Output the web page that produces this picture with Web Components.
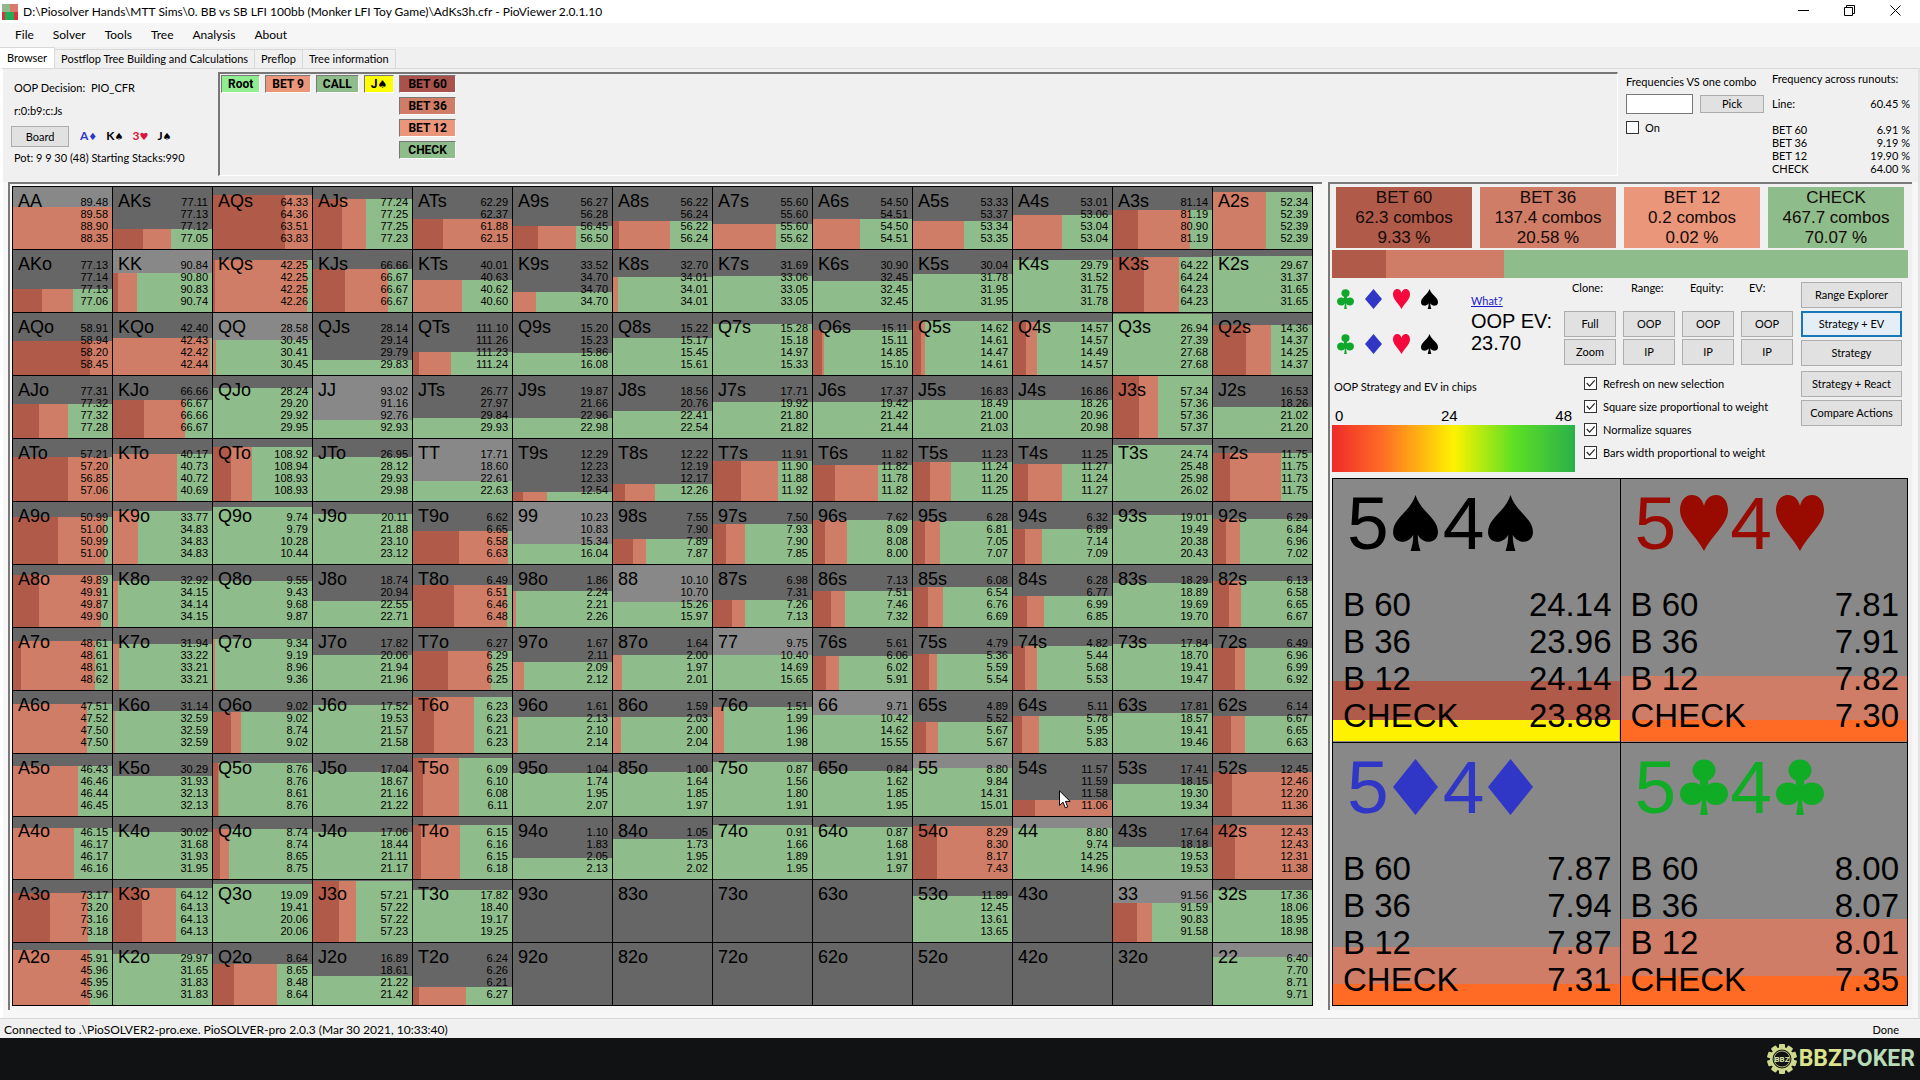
<!DOCTYPE html>
<html lang="en">
<head>
<meta charset="utf-8">
<title>PioViewer</title>
<style>
html, body { margin: 0; height: 100%; }
body {
  --dark: #b05b4a; --mid: #cf7d66; --light: #e9967a; --check: #8fbc8b; --line: #000;
  --arial: "Liberation Sans", Arial, sans-serif;
  font: 11px/14px Lato, sans-serif; color: #000; background: #f0f0f0;
}
</style>
</head>
<body>
<pio-window></pio-window>
<script>
const define = (name, css, html) => customElements.define(name, class extends HTMLElement {
  constructor() {
    super();
    this.attachShadow({ mode: 'open' });
  }
  connectedCallback() {
    const body = typeof html === 'function' ? html(this) : html;
    this.shadowRoot.innerHTML = `<style>*{box-sizing:border-box}${css}</style>${body}`;
  }
});

/* ---------- suits ---------- */
const SUITS = {
  s: ['#000', '<path d="M50 0C57 24 78 40 90 56C104 74 104 98 84 103C72 106 60 98 55 88C55 102 57 112 61 124H39C43 112 45 102 45 88C40 98 28 106 16 103C-4 98 -4 74 10 56C22 40 43 24 50 0Z"/>'],
  h: ['#f5083c', '<path d="M50 24C46 8 37 0 25 0C10 0 0 14 0 34C0 64 32 88 50 124C68 88 100 64 100 34C100 14 90 0 75 0C63 0 54 8 50 24Z"/>'],
  d: ['#3036c6', '<path d="M50 0L100 62L50 124L0 62Z"/>'],
  c: ['#10a82c', '<circle cx="50" cy="25" r="24"/><circle cx="25" cy="77" r="25"/><circle cx="75" cy="77" r="25"/><path d="M42 40H58L60 80H54C54 98 56 110 58 124H42C44 110 46 98 46 80H40Z"/>']
};
define('suit-icon',
  ':host{display:inline-block;width:17px;height:20px}svg{display:block;width:100%;height:100%}',
  el => {
    const [color, shape] = SUITS[el.getAttribute('suit')];
    return `<svg viewBox="0 0 100 124" preserveAspectRatio="none" fill="${el.getAttribute('color') || color}" aria-hidden="true">${shape}</svg>`;
  });

/* ---------- small controls ---------- */
define('pio-button',
  `:host{display:block}
   button{display:block;width:100%;height:100%;margin:0;padding:0;border:1px solid #adadad;background:#e1e1e1;color:#000;font:inherit;text-align:center}
   :host([active]) button{border:2px solid #1877b8;background:#e4eef6}`,
  '<button type="button"><slot></slot></button>');

define('pio-check',
  `:host{display:block}
   label{display:flex;align-items:center;gap:6px;height:100%}
   input{appearance:none;margin:0;width:13px;height:13px;border:1px solid #333;background:#fff;display:grid}
   input:checked::before{content:"";background:#222;clip-path:polygon(12% 50%,20% 42%,42% 66%,84% 18%,92% 26%,42% 82%)}`,
  el => `<label><input type="checkbox"${el.hasAttribute('checked') ? ' checked' : ''}><slot></slot></label>`);

/* ---------- window chrome ---------- */
define('pio-titlebar',
  `:host{display:flex;align-items:center;height:23px;background:#fff;padding:0 14px 0 2px;font-size:12px;line-height:16px}
   .icon{width:16px;height:16px;margin-right:5px}
   .buttons{margin-left:auto;display:flex;gap:24px;padding-bottom:3px}
   button{border:0;background:none;padding:0;width:22px;height:18px;display:grid;place-items:center}
   svg{display:block}`,
  `<svg class="icon" viewBox="0 0 16 16" aria-hidden="true"><path fill="#8fb98b" d="M0 0h8v8H0z"/><path fill="#d9786b" d="M8 0h8v8H8z"/><path fill="#d8333d" d="M0 8h3v8H0zM12 8h4v8h-4z"/><path fill="#1fae55" d="M3 8h9v8H3z"/></svg>
   <span>D:\\Piosolver Hands\\MTT Sims\\0. BB vs SB LFI 100bb (Monker LFI Toy Game)\\AdKs3h.cfr - PioViewer 2.0.1.10</span>
   <div class="buttons">
     <button type="button" aria-label="Minimize"><svg width="11" height="11" fill="none" stroke="#000"><path d="M0 5.5H11"/></svg></button>
     <button type="button" aria-label="Restore"><svg width="11" height="11" fill="none" stroke="#000"><path d="M.5 2.500H8.500V10.500H.5ZM2.500 2.500V.5H10.500V8.500H8.500"/></svg></button>
     <button type="button" aria-label="Close"><svg width="11" height="11" fill="none" stroke="#000"><path d="M.5.5L10.500 10.500M10.500.5L.5 10.500"/></svg></button>
   </div>`);

define('pio-menu',
  `:host{display:flex;align-items:center;gap:19px;height:24px;padding-left:15px;background:#f6f6f7;font-size:12px;line-height:16px}
   button{border:0;background:none;padding:0;font:inherit;color:#000}`,
  ['File', 'Solver', 'Tools', 'Tree', 'Analysis', 'About'].map(t => `<button type="button">${t}</button>`).join(''));

define('pio-tabs',
  `:host{display:flex;align-items:flex-end;height:21px}
   button{font:inherit;color:#000;background:#f0f0f0;border:1px solid #d9d9d9;border-width:1px 1px 0 0;height:19px;padding:0 6px}
   .on{background:#fff;height:21px;padding:0 7px 1px}`,
  `<button type="button" class="on">Browser</button><button type="button">Postflop Tree Building and Calculations</button><button type="button">Preflop</button><button type="button">Tree information</button>`);

/* ---------- header strip ---------- */
define('decision-info',
  `:host{display:flex;flex-direction:column;align-items:flex-start;gap:9px;width:218px;padding:12px 0 0 14px}
   .board{display:flex;align-items:center;margin:-1px 0 -5px -3px;gap:9px;font-size:12px}
   pio-button{width:58px;height:21px;margin-right:2px;font-size:11px}
   b{white-space:nowrap}
   i{font:normal 10px/14px "DejaVu Sans",sans-serif}`,
  `<span>OOP Decision:&nbsp; PIO_CFR</span><span>r:0:b9:c:Js</span>
   <div class="board"><pio-button>Board</pio-button>
     <b style="color:#3036c6">A<i>♦</i></b><b>K<i>♠</i></b><b style="color:#dc143c">3<i>♥</i></b><b>J<i>♠</i></b></div>
   <span>Pot: 9 9 30 (48) Starting Stacks:990</span>`);

define('tree-node',
  `:host{display:block}
   button{display:block;box-sizing:border-box;width:100%;height:18px;padding:0 var(--pad,6px);border:1px solid #fff;border-top-color:#777;border-left-color:#777;background:var(--c);color:#000;font:bold 12px/14px Roboto,sans-serif;white-space:nowrap}`,
  '<button type="button"><slot></slot></button>');

define('game-tree',
  `:host{display:flex;align-items:flex-start;gap:5px;flex:1;height:104px;margin-top:3px;padding:1px;border:1px solid #fff;border-top:2px solid #777;border-left:2px solid #777}
   .next{display:grid;gap:4px;--pad:8px}
   i{font:normal 11px/14px "DejaVu Sans",sans-serif}`,
  `<tree-node style="--c:#90ee90">Root</tree-node>
   <tree-node style="--c:var(--light)">BET 9</tree-node>
   <tree-node style="--c:var(--check)">CALL</tree-node>
   <tree-node style="--c:#ff0">J<i>♠</i></tree-node>
   <div class="next">
     <tree-node style="--c:#a9524b">BET 60</tree-node>
     <tree-node style="--c:var(--mid)">BET 36</tree-node>
     <tree-node style="--c:var(--light)">BET 12</tree-node>
     <tree-node style="--c:var(--check)">CHECK</tree-node>
   </div>`);

define('combo-filter',
  `:host{display:block;width:154px;padding:6px 0 0 8px}
   label{display:block;white-space:nowrap}
   .row{display:flex;align-items:center;gap:7px;margin:5px 0 7px}
   input{width:67px;height:20px;padding:0 3px;border:1px solid #777;background:#fff;font:inherit}
   pio-button{width:64px;height:18px}
   pio-check{height:13px}`,
  `<label for="combo">Frequencies VS one combo</label>
   <div class="row"><input id="combo" type="text"><pio-button>Pick</pio-button></div>
   <pio-check>On</pio-check>`);

define('runout-stats',
  `:host{display:block;width:146px;padding:3px 8px 0 0}
   table{width:100%;border-collapse:collapse}
   caption{text-align:left;white-space:nowrap;padding-bottom:11px}
   td,th{padding:0;font-weight:normal;text-align:left;line-height:13px}
   td{text-align:right}
   tr:first-child>*{padding-bottom:13px}`,
  `<table><caption>Frequency across runouts:</caption><tbody>${
    [['Line:', '60.45'], ['BET 60', '6.91'], ['BET 36', '9.19'], ['BET 12', '19.90'], ['CHECK', '64.00']]
      .map(([n, v]) => `<tr><th scope="row">${n}</th><td>${v} %</td></tr>`).join('')}</tbody></table>`);

/* ---------- range matrix ----------
   hand : four EVs : bar height (of 62) : end of the dark part : end of the middle part (of 99) */
const HANDS = `
AA:89.48 89.58 88.90 88.35:42:0:99|AKs:77.11 77.13 77.12 77.05:20:30:58|AQs:64.33 64.36 63.51 63.83:54:72:99|AJs:77.24 77.25 77.25 77.23:50:29:53|ATs:62.29 62.37 61.88 62.15:30:30:99|A9s:56.27 56.28 56.45 56.50:23:25:63|A8s:56.22 56.24 56.22 56.24:28:6:57|A7s:55.60 55.60 55.60 55.62:25:0:63|A6s:54.50 54.51 54.50 54.51:30:0:47|A5s:53.33 53.37 53.34 53.35:28:0:51|A4s:53.01 53.06 53.04 53.04:34:0:49|A3s:81.14 81.19 80.90 81.19:39:25:77|A2s:52.34 52.39 52.39 52.39:57:0:53
AKo:77.13 77.14 77.13 77.06:23:29:60|KK:90.84 90.80 90.83 90.74:39:5:24|KQs:42.25 42.25 42.25 42.26:52:2:94|KJs:66.66 66.67 66.67 66.67:43:32:75|KTs:40.01 40.63 40.62 40.60:32:0:49|K9s:33.52 34.70 34.70 34.70:20:0:23|K8s:32.70 34.01 34.01 34.01:35:0:5|K7s:31.69 33.06 33.05 33.05:36:0:0|K6s:30.90 32.45 32.45 32.45:31:0:0|K5s:30.04 31.78 31.95 31.95:38:0:0|K4s:29.79 31.52 31.75 31.78:52:0:0|K3s:64.22 64.24 64.23 64.23:55:31:66|K2s:29.67 31.37 31.65 31.65:56:0:0
AQo:58.91 58.94 58.20 58.45:34:77:99|KQo:42.40 42.43 42.42 42.44:37:0:97|QQ:28.58 30.45 30.41 30.45:35:0:3|QJs:28.14 29.14 29.79 29.83:15:0:0|QTs:111.10 111.26 111.23 111.24:23:6:38|Q9s:15.20 15.23 15.86 16.08:22:0:0|Q8s:15.22 15.17 15.45 15.61:37:0:0|Q7s:15.28 15.18 14.97 15.33:51:0:0|Q6s:15.11 15.11 14.85 15.10:45:9:11|Q5s:14.62 14.61 14.47 14.61:54:8:12|Q4s:14.57 14.57 14.49 14.57:53:13:24|Q3s:26.94 27.39 27.68 27.68:61:0:0|Q2s:14.36 14.37 14.25 14.37:50:33:58
AJo:77.31 77.32 77.32 77.28:34:26:55|KJo:66.66 66.67 66.66 66.67:38:31:72|QJo:28.24 29.20 29.92 29.95:50:0:0|JJ:93.02 91.16 92.76 92.93:18:0:0|JTs:26.77 27.97 29.84 29.93:20:0:0|J9s:19.87 21.66 22.96 22.98:20:0:0|J8s:18.56 20.76 22.41 22.54:27:0:0|J7s:17.71 19.92 21.80 21.82:36:0:0|J6s:17.37 19.42 21.42 21.44:36:0:0|J5s:16.83 18.49 21.00 21.03:38:0:0|J4s:16.86 18.26 20.96 20.98:38:0:0|J3s:57.34 57.36 57.36 57.37:62:26:45|J2s:16.53 18.26 21.02 21.20:31:0:0
ATo:57.21 57.20 56.85 57.06:44:55:97|KTo:40.17 40.73 40.72 40.69:47:0:64|QTo:108.92 108.94 108.93 108.93:54:18:39|JTo:26.95 28.12 29.93 29.98:44:0:0|TT:17.71 18.60 22.61 22.63:20:0:0|T9s:12.29 12.23 12.33 12.54:9:10:34|T8s:12.22 12.19 12.17 12.26:17:12:42|T7s:11.91 11.90 11.88 11.92:40:28:65|T6s:11.82 11.82 11.78 11.82:36:22:65|T5s:11.23 11.24 11.20 11.25:39:17:38|T4s:11.25 11.27 11.24 11.27:37:15:49|T3s:24.74 25.48 25.98 26.02:56:0:0|T2s:11.75 11.75 11.73 11.75:48:17:68
A9o:50.99 51.00 50.99 51.00:47:45:92|K9o:33.77 34.83 34.83 34.83:53:0:25|Q9o:9.74 9.79 10.28 10.44:57:0:0|J9o:20.11 21.88 23.10 23.12:50:0:0|T9o:6.62 6.65 6.58 6.63:33:46:95|99:10.23 10.83 15.34 16.04:20:0:0|98s:7.55 7.90 7.89 7.87:25:20:33|97s:7.50 7.93 7.90 7.85:40:13:32|96s:7.62 8.09 8.08 8.00:44:12:34|95s:6.28 6.81 7.05 7.07:43:12:27|94s:6.32 6.89 7.14 7.09:35:12:29|93s:19.01 19.49 20.38 20.43:49:0:0|92s:6.29 6.84 6.96 7.02:45:13:27
A8o:49.89 49.91 49.87 49.90:52:26:88|K8o:32.92 34.15 34.14 34.15:46:0:5|Q8o:9.55 9.43 9.68 9.87:46:0:0|J8o:18.74 20.94 22.55 22.71:26:0:0|T8o:6.49 6.51 6.46 6.48:42:41:94|98o:1.86 2.24 2.21 2.26:36:0:3|88:10.10 10.70 15.26 15.97:25:0:0|87s:6.98 7.31 7.26 7.13:27:19:32|86s:7.13 7.51 7.46 7.32:36:18:32|85s:6.08 6.54 6.76 6.69:40:15:30|84s:6.28 6.77 6.99 6.85:31:14:31|83s:18.29 18.89 19.69 19.70:44:0:0|82s:6.13 6.58 6.65 6.67:46:16:28
A7o:48.61 48.61 48.61 48.62:49:8:82|K7o:31.94 33.22 33.21 33.21:46:0:6|Q7o:9.34 9.19 8.96 9.36:51:0:2|J7o:17.82 20.06 21.94 21.96:35:0:0|T7o:6.27 6.29 6.25 6.25:39:35:78|97o:1.67 2.11 2.09 2.12:28:0:11|87o:1.64 2.00 1.97 2.01:35:0:9|77:9.75 10.40 14.69 15.65:35:0:0|76s:5.61 6.06 6.02 5.91:34:13:26|75s:4.79 5.36 5.59 5.54:36:16:24|74s:4.82 5.44 5.68 5.53:44:12:24|73s:17.84 18.70 19.41 19.47:46:0:0|72s:6.49 6.96 6.99 6.92:42:22:32
A6o:47.51 47.52 47.50 47.50:49:0:74|K6o:31.14 32.59 32.59 32.59:42:0:2|Q6o:9.02 9.02 8.74 9.02:41:18:28|J6o:17.52 19.53 21.57 21.58:48:0:0|T6o:6.23 6.23 6.21 6.23:56:21:61|96o:1.61 2.13 2.10 2.14:36:0:5|86o:1.59 2.03 2.00 2.04:36:0:8|76o:1.51 1.99 1.96 1.98:46:0:11|66:9.71 10.42 14.62 15.55:38:0:0|65s:4.89 5.52 5.67 5.67:31:13:25|64s:5.11 5.78 5.95 5.83:37:9:26|63s:17.81 18.57 19.41 19.46:40:0:0|62s:6.14 6.67 6.65 6.63:37:18:32
A5o:46.43 46.46 46.44 46.45:50:0:65|K5o:30.29 31.93 32.13 32.13:40:0:0|Q5o:8.76 8.76 8.61 8.76:53:5:6|J5o:17.04 18.67 21.16 21.22:44:0:0|T5o:6.09 6.10 6.08 6.11:58:10:46|95o:1.04 1.74 1.95 2.07:43:0:0|85o:1.00 1.64 1.85 1.97:44:0:0|75o:0.87 1.56 1.80 1.91:54:0:0|65o:0.84 1.62 1.85 1.95:45:0:0|55:8.80 9.84 14.31 15.01:48:0:0|54s:11.57 11.59 11.58 11.06:16:22:99|53s:17.41 18.15 19.30 19.34:32:0:0|52s:12.45 12.46 12.20 11.36:44:19:99
A4o:46.15 46.17 46.17 46.16:51:0:61|K4o:30.02 31.68 31.93 31.95:47:0:0|Q4o:8.74 8.74 8.65 8.75:50:7:16|J4o:17.06 18.44 21.11 21.17:47:0:0|T4o:6.15 6.16 6.15 6.18:54:8:47|94o:1.10 1.83 2.05 2.13:21:0:0|84o:1.05 1.73 1.95 2.02:40:0:0|74o:0.91 1.66 1.89 1.95:54:0:0|64o:0.87 1.68 1.91 1.97:52:0:0|54o:8.29 8.30 8.17 7.43:53:24:99|44:8.80 9.74 14.25 14.96:51:0:0|43s:17.64 18.18 19.53 19.53:32:0:0|42s:12.43 12.43 12.31 11.38:54:22:99
A3o:73.17 73.20 73.16 73.18:49:37:75|K3o:64.12 64.13 64.13 64.13:54:29:63|Q3o:19.09 19.41 20.06 20.06:58:0:0|J3o:57.21 57.22 57.22 57.23:61:26:43|T3o:17.82 18.40 19.17 19.25:52:0:0|93o::0:0:0|83o::0:0:0|73o::0:0:0|63o::0:0:0|53o:11.89 12.45 13.61 13.65:46:0:0|43o::0:0:0|33:91.56 91.59 90.83 91.58:39:24:39|32s:17.36 18.06 18.95 18.98:52:0:0
A2o:45.91 45.96 45.95 45.96:55:0:77|K2o:29.97 31.65 31.83 31.83:51:0:0|Q2o:8.64 8.65 8.48 8.64:41:21:64|J2o:16.89 18.61 21.22 21.42:29:0:0|T2o:6.24 6.26 6.21 6.27:18:6:53|92o::0:0:0|82o::0:0:0|72o::0:0:0|62o::0:0:0|52o::0:0:0|42o::0:0:0|32o::0:0:0|22:6.40 7.70 8.71 9.71:48:0:0`
  .trim().split(/[|\n]/).map(s => s.split(':'));

define('hand-cell',
  `:host{display:flex;justify-content:space-between;min-width:0;position:relative;padding:0 4px 0 5px;font-family:var(--arial);
     border-right:1px solid var(--line);border-bottom:1px solid var(--line);
     background:linear-gradient(to right,var(--dark) 0 var(--d),var(--mid) var(--d) var(--m),var(--check) var(--m)) bottom/100% var(--h) no-repeat var(--back)}
   .name{padding-top:4px;font-size:18px;line-height:20px}
   .evs{padding-top:9px;line-height:12px;text-align:right}
   .evs span{display:block}`,
  el => `<span class="name">${el.dataset.hand}</span><div class="evs">${
    el.dataset.evs.split(' ').map(v => `<span>${v}</span>`).join('')}</div><slot></slot>`);

define('mouse-pointer',
  ':host{position:absolute;left:46%;top:58%;width:12px;height:19px}svg{display:block}',
  '<svg width="12" height="19" viewBox="0 0 12 19" aria-hidden="true"><path fill="#fff" stroke="#000" d="M.5.8V15.500L4 12.200L6.300 17.800L8.700 16.800L6.400 11.400H11.200Z"/></svg>');

define('hand-matrix',
  `:host{display:grid;grid-template-columns:repeat(13,minmax(0,1fr));grid-auto-rows:minmax(0,1fr);border:1px solid var(--line);border-width:1px 0 0 1px}`,
  () => HANDS.map(([hand, evs, h, d, m]) => {
    const back = hand[0] === hand[1] ? '#888' : '#666';
    return `<hand-cell data-hand="${hand}" data-evs="${evs}" style="--back:${back};--h:${h / 62 * 100}%;--d:${d / 99 * 100}%;--m:${m / 99 * 100}%">${hand === '54s' ? '<mouse-pointer></mouse-pointer>' : ''}</hand-cell>`;
  }).join(''));

/* ---------- strategy panel ---------- */
define('action-card',
  `:host{display:block;flex:1;height:61px;background:var(--c);text-align:center;font:17px/20px var(--arial)}
   button{display:block;width:100%;height:100%;border:0;padding:0;background:none;font:inherit;color:#140a08}
   span{display:block}`,
  el => `<button type="button"><span><slot></slot></span><span>${el.getAttribute('combos')} combos</span><span>${el.getAttribute('share')} %</span></button>`);

define('strategy-summary',
  `:host{display:block}
   .cards{display:flex;gap:8px;padding:0 4px}
   .bar{height:28px;margin-top:2px;background:linear-gradient(to right,var(--dark) 0 9.33%,var(--mid) 9.33% 29.91%,var(--light) 29.91% 29.93%,var(--check) 29.93%)}`,
  `<div class="cards">
     <action-card combos="62.3" share="9.33" style="--c:var(--dark)">BET 60</action-card>
     <action-card combos="137.4" share="20.58" style="--c:var(--mid)">BET 36</action-card>
     <action-card combos="0.2" share="0.02" style="--c:var(--light)">BET 12</action-card>
     <action-card combos="467.7" share="70.07" style="--c:var(--check)">CHECK</action-card>
   </div><div class="bar"></div>`);

define('strategy-controls',
  `:host{display:flex;height:200px}
   .left{flex:1}
   .top{display:flex;height:87px}
   .suits{display:grid;grid-template-columns:repeat(4,28px);gap:25px 0;align-content:start;padding:11px 0 0 5px}
   .ev{padding:16px 0 0 22px;white-space:nowrap}
   .ev a{display:block;color:#1a1ac8;margin-bottom:2px;text-decoration:underline}
   .ev span{display:block;font:20px/22px var(--arial)}
   .clone{margin-left:auto;display:flex;gap:7px;padding-top:3px}
   .clone div{width:52px}
   .clone span{display:block;padding-left:8px;margin-bottom:16px}
   pio-button{height:26px}
   .clone pio-button+pio-button{margin-top:2px}
   .bottom{display:flex;gap:9px}
   .scale{width:243px;padding-top:15px}
   .title{padding-left:2px}
   .marks{display:flex;justify-content:space-between;padding:0 3px;margin-top:13px;font:15px/18px var(--arial)}
   .ramp{height:47px;background:linear-gradient(to right,#ee2a28,#ff6a26 20%,#fff200 50%,#5ce024 75%,#2bb04a)}
   .checks{padding-top:7px}
   .checks pio-check{height:23px}
   .modes{width:101px;margin:4px 6px 0 8px;display:flex;flex-direction:column;gap:3px}
   .late{margin-top:2px}`,
  `<div class="left">
     <div class="top">
       <div class="suits">${'cdhscdhs'.split('').map(s => `<suit-icon suit="${s}"></suit-icon>`).join('')}</div>
       <div class="ev"><a href="#what">What?</a><span>OOP EV:</span><span>23.70</span></div>
       <div class="clone">
         <div><span>Clone:</span><pio-button>Full</pio-button><pio-button>Zoom</pio-button></div>
         <div><span>Range:</span><pio-button>OOP</pio-button><pio-button>IP</pio-button></div>
         <div><span>Equity:</span><pio-button>OOP</pio-button><pio-button>IP</pio-button></div>
         <div><span>EV:</span><pio-button>OOP</pio-button><pio-button>IP</pio-button></div>
       </div>
     </div>
     <div class="bottom">
       <div class="scale"><div class="title">OOP Strategy and EV in chips</div>
         <div class="marks"><span>0</span><span>24</span><span>48</span></div><div class="ramp"></div></div>
       <div class="checks">
         <pio-check checked>Refresh on new selection</pio-check>
         <pio-check checked>Square size proportional to weight</pio-check>
         <pio-check checked>Normalize squares</pio-check>
         <pio-check checked>Bars width proportional to weight</pio-check>
       </div>
     </div>
   </div>
   <div class="modes">
     <pio-button>Range Explorer</pio-button><pio-button active>Strategy + EV</pio-button><pio-button>Strategy</pio-button>
     <pio-button class="late">Strategy + React</pio-button><pio-button>Compare Actions</pio-button>
   </div>`);

define('combo-card',
  `:host{display:block;min-width:0;padding:0 8px 0 10px;color:#000;font-family:var(--arial);
     background:linear-gradient(var(--base),var(--base)) bottom/100% var(--low) no-repeat,linear-gradient(var(--c),var(--c)) bottom/100% var(--h) no-repeat #888}
   .cards{display:flex;align-items:center;padding-left:4px;height:88px;color:var(--ink);font-size:75px;line-height:88px}
   suit-icon{width:45px;height:56px;margin:0 5px 0 4px}
   :host([wide]) suit-icon{width:48px;margin-right:2px}
   dl{margin:19px 0 0;display:grid;grid-template-columns:auto auto;font-size:33px;line-height:37px}
   dt,dd{margin:0}dd{text-align:right}`,
  el => {
    const s = el.getAttribute('suit'), ink = el.getAttribute('ink');
    const icon = `<suit-icon suit="${s}" color="${ink}"></suit-icon>`;
    const names = ['B 60', 'B 36', 'B 12', 'CHECK'];
    return `<div class="cards" style="--ink:${ink}">5${icon}4${icon}</div><dl>${
      el.getAttribute('evs').split(' ').map((v, i) => `<dt>${names[i]}</dt><dd>${v}</dd>`).join('')}</dl>`;
  });

define('combo-grid',
  `:host{display:grid;grid-template-columns:1fr 1fr;grid-auto-rows:minmax(0,1fr);gap:1px;padding:1px;background:#000}`,
  `<combo-card suit="s" ink="#000000" evs="24.14 23.96 24.14 23.88" style="--c:var(--dark);--base:#fff200;--h:23%;--low:8%"></combo-card>
   <combo-card suit="h" wide ink="#990a00" evs="7.81 7.91 7.82 7.30" style="--c:var(--mid);--base:#ff6b24;--h:25%;--low:8%"></combo-card>
   <combo-card suit="d" ink="#3036c6" evs="7.87 7.94 7.87 7.31" style="--c:var(--mid);--base:#ff6b24;--h:22%;--low:8%"></combo-card>
   <combo-card suit="c" wide ink="#10ac26" evs="8.00 8.07 8.01 7.35" style="--c:var(--mid);--base:#ff6b24;--h:33%;--low:11%"></combo-card>`);

/* ---------- footer ---------- */
define('pio-status',
  `:host{display:flex;justify-content:space-between;align-items:center;height:20px;padding:2px 21px 0 4px;border-top:1px solid #d7d7d7;box-sizing:border-box;font-size:12px;line-height:16px}
   .done{font-size:11px;line-height:14px}`,
  `<span>Connected to .\\PioSOLVER2-pro.exe. PioSOLVER-pro 2.0.3 (Mar 30 2021, 10:33:40)</span><span class="done">Done</span>`);

define('brand-bar',
  `:host{display:flex;align-items:center;justify-content:flex-end;gap:2px;height:42px;padding-right:5px;background:#111214;color:#dbe38c;font:bold 23px/32px Roboto,sans-serif}
   em{font-style:normal;color:#b9dcb8}`,
  () => {
    const teeth = Array.from({ length: 10 }, (_, i) => `<rect x="-3" y="-15" width="6" height="6" rx="1" transform="rotate(${i * 36})"/>`).join('');
    return `<svg width="30" height="30" viewBox="-15 -15 30 30" aria-hidden="true"><g fill="#cfd98c">${teeth}<circle r="12"/></g><circle r="9" fill="#111214" stroke="#111214"/><circle r="8" fill="none" stroke="#cfd98c" stroke-width=".8"/><text y="3" text-anchor="middle" font-size="8" fill="#dbe8b0">BBZ</text></svg><span>BBZ<em>POKER</em></span>`;
  });

/* ---------- whole window ---------- */
define('pio-window',
  `:host{display:flex;flex-direction:column;height:100vh;background:#f0f0f0}
   .page{flex:1;min-height:0;display:flex;flex-direction:column;border-top:1px solid #d9d9d9;border-right:2px solid #e2e2e2;border-left:3px solid #fff;margin-left:0}
   .head{display:flex;height:113px;margin-left:-3px}
   .work{flex:1;min-height:0;display:flex;gap:6px;padding:0 6px 8px 5px;background:#f7f7f7}
   .panel{background:#f6f7f5;border-top:2px solid #7a7a7a;border-left:2px solid #7a7a7a}
   .matrix{flex:1;min-width:0;display:flex;padding:2px 9px 4px 2px}
   .matrix hand-matrix{flex:1}
   .side{width:584px;display:flex;flex-direction:column;padding:3px 4px 4px 2px;background:#f0f0f0}
   .side combo-grid{flex:1;min-height:0}`,
  `<pio-titlebar></pio-titlebar><pio-menu></pio-menu><pio-tabs></pio-tabs>
   <main class="page">
     <div class="head"><decision-info></decision-info><game-tree></game-tree><combo-filter></combo-filter><runout-stats></runout-stats></div>
     <div class="work">
       <section class="panel matrix"><hand-matrix></hand-matrix></section>
       <section class="panel side"><strategy-summary></strategy-summary><strategy-controls></strategy-controls><combo-grid></combo-grid></section>
     </div>
   </main>
   <pio-status></pio-status><brand-bar></brand-bar>`);
</script>
</body>
</html>
